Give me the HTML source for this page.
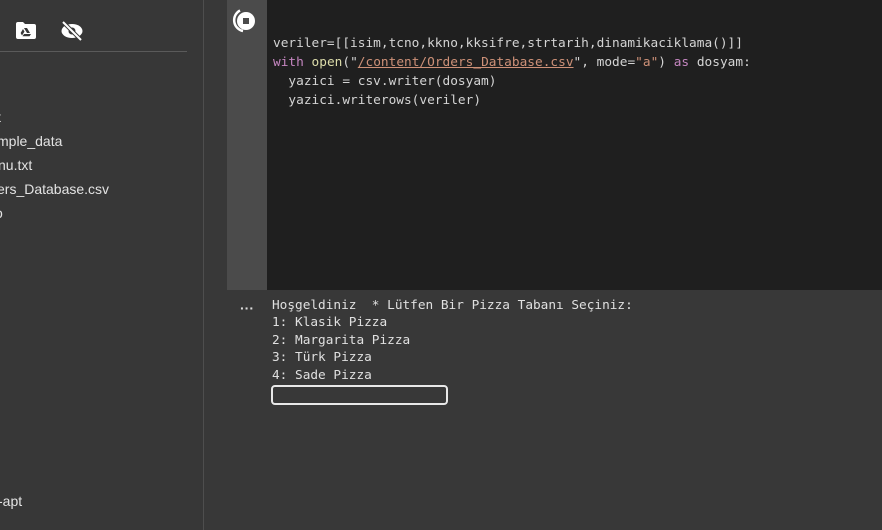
<!DOCTYPE html>
<html><head><style>
*{margin:0;padding:0;box-sizing:border-box}
body{width:882px;height:530px;overflow:hidden;background:#383838;position:relative;font-family:"Liberation Sans",sans-serif}
.side{position:absolute;left:0;top:0;width:204px;height:530px;background:#373737;border-right:1px solid #4e4e4e}
.hr{position:absolute;left:0;top:51px;width:187px;height:1px;background:#5a5a5a}
.f{position:absolute;left:0;color:#e3e3e3;font-size:14px;white-space:nowrap}
.gut{position:absolute;left:227px;top:0;width:40px;height:290px;background:#4b4b4b}
.code{position:absolute;left:267px;top:0;width:615px;height:290px;background:#1f1f1f}
.mono{font-family:"DejaVu Sans Mono","Liberation Mono",monospace;white-space:pre;position:absolute}
.c{color:#d4d4d4;left:273px;line-height:19px;top:34px;font-size:12.8px}
.k{color:#c586c0}.s{color:#ce9178;text-decoration:underline;text-decoration-color:#ce9178}.s2{color:#ce9178}.y{color:#dcdcaa}
.o{color:#e0e0e0;left:272px;top:297px;line-height:17.4px;font-size:12.75px}
.inp{position:absolute;left:271px;top:385px;width:177px;height:20px;border:2px solid #e8e8e8;border-radius:4px;background:#383838}
.dots{position:absolute;left:240px;top:300px;color:#ddd;font-size:14px;font-weight:bold}
.topline{position:absolute;left:227px;top:0;width:655px;height:1px;background:#555}
</style></head><body>
<div class="side">
<div class="hr"></div>
<svg style="position:absolute;left:16px;top:22px" width="20" height="17" viewBox="0 0 20 17"><path d="M0 2a2 2 0 0 1 2-2h5l2 2h9a2 2 0 0 1 2 2v11a2 2 0 0 1-2 2H2a2 2 0 0 1-2-2z" fill="#fff"/><path d="M8 6h3l3 5h-3z M7 7l1.5 2.6L6 13.5 4.6 11z M8 12h7l-1.5 2.3h-7z" fill="#373737"/></svg>
<svg style="position:absolute;left:60px;top:21px" width="24" height="20" viewBox="0 0 24 20"><ellipse cx="12" cy="10" rx="10.5" ry="7" fill="#fff"/><circle cx="12" cy="10" r="3.5" fill="#373737"/><line x1="3" y1="1" x2="21" y2="19" stroke="#373737" stroke-width="4"/><line x1="3" y1="1" x2="21" y2="19" stroke="#fff" stroke-width="2"/></svg>
<div class="f" style="left:-3px;top:109px">t</div>
<div class="f" style="left:-3px;top:133px">mple_data</div>
<div class="f" style="left:-2px;top:157px">nu.txt</div>
<div class="f" style="left:-3px;top:181px">ers_Database.csv</div>
<div class="f" style="left:-5px;top:205px">o</div>
<div class="f" style="left:-2px;top:493px">-apt</div>
</div>
<div class="topline"></div>
<div class="gut"></div>
<svg style="position:absolute;left:232px;top:7px" width="26" height="28" viewBox="0 0 26 28"><path d="M8 3.5A11 11 0 0 0 11 24" stroke="#fff" stroke-width="2.5" fill="none"/><circle cx="14" cy="14" r="9" fill="#fff"/><rect x="11" y="11" width="6" height="6" fill="#4b4b4b"/></svg>
<div class="code"></div>
<div class="mono c">veriler=[[isim,tcno,kkno,kksifre,strtarih,dinamikaciklama()]]
<span class="k">with</span> <span class="y">open</span>("<span class="s">/content/Orders_Database.csv</span>", mode=<span class="s2">"a"</span>) <span class="k">as</span> dosyam:
  yazici = csv.writer(dosyam)
  yazici.writerows(veriler)</div>
<div class="dots">···</div>
<div class="mono o">Hoşgeldiniz  * Lütfen Bir Pizza Tabanı Seçiniz:
1: Klasik Pizza
2: Margarita Pizza
3: Türk Pizza
4: Sade Pizza</div>
<div class="inp"></div>
</body></html>
